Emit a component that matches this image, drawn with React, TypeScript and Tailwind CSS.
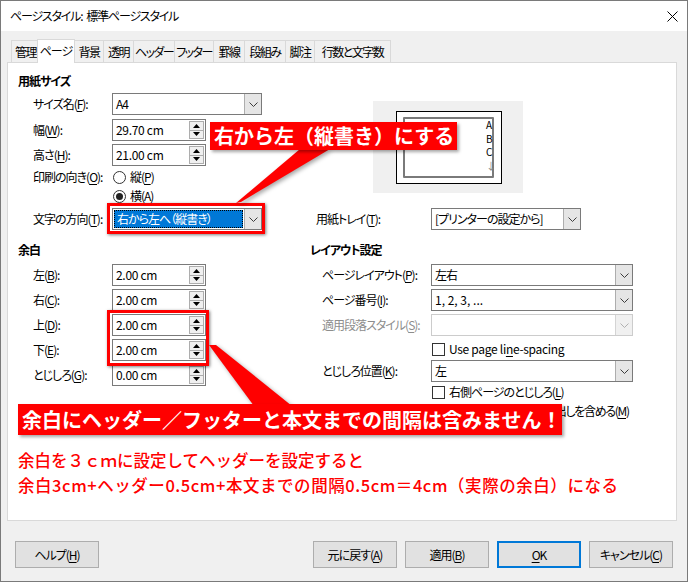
import React from "react";

const FONT = "font-['Noto_Sans_CJK_JP','Noto_Sans',sans-serif]";
const PALT = "[font-feature-settings:'palt']";

function U({ children }: { children: React.ReactNode }) {
  return <span className="underline underline-offset-[2px]">{children}</span>;
}

function Chevron({ color = "#3c3c3c" }: { color?: string }) {
  return (
    <svg width="9" height="5" viewBox="0 0 9 5">
      <path d="M0.5 0.5L4.5 4.5L8.5 0.5" fill="none" stroke={color} strokeWidth="1" />
    </svg>
  );
}

function Combo({
  width,
  children,
  disabled,
  selected,
}: {
  width: string;
  children?: React.ReactNode;
  disabled?: boolean;
  selected?: boolean;
}) {
  return (
    <div
      className={`${width} flex h-[22px] shrink-0 border bg-white ${
        disabled ? "border-[#cccccc]" : "border-[#7a7a7a]"
      }`}
    >
      {selected ? (
        <div className="flex flex-1 p-px">
          <div className="flex flex-1 items-center border border-dotted border-black bg-[#0078d7] pl-[2px] text-white">
            {children}
          </div>
        </div>
      ) : (
        <div className="flex flex-1 items-center whitespace-nowrap pl-[3px]">{children}</div>
      )}
      <div
        className={`flex w-[17px] items-center justify-center border-l ${
          disabled ? "border-[#d4d4d4] bg-[#f0f0f0]" : "border-[#adadad] bg-[#e5e5e5]"
        }`}
      >
        <Chevron color={disabled ? "#b0b0b0" : "#3c3c3c"} />
      </div>
    </div>
  );
}

function Spin({ value }: { value: string }) {
  return (
    <div className="flex h-[22px] w-[94px] shrink-0 border border-[#7a7a7a] bg-white">
      <div className="flex flex-1 items-center pl-[3px] tracking-[-0.3px]">{value}</div>
      <div className="flex w-[16px] flex-col py-px pr-px">
        <div className="flex flex-1 items-center justify-center border border-[#adadad] bg-[#f0f0f0]">
          <svg width="7" height="4" viewBox="0 0 7 4">
            <path d="M3.5 0L7 4H0Z" fill="#000" />
          </svg>
        </div>
        <div className="-mt-px flex flex-1 items-center justify-center border border-[#adadad] bg-[#f0f0f0]">
          <svg width="7" height="4" viewBox="0 0 7 4">
            <path d="M0 0H7L3.5 4Z" fill="#000" />
          </svg>
        </div>
      </div>
    </div>
  );
}

function Radio({ checked }: { checked?: boolean }) {
  return (
    <span className="flex h-[13px] w-[13px] shrink-0 items-center justify-center rounded-full border border-[#333333] bg-white">
      {checked && <span className="h-[7px] w-[7px] rounded-full bg-[#222222]" />}
    </span>
  );
}

function Check() {
  return <span className="h-[13px] w-[13px] shrink-0 border border-[#333333] bg-white" />;
}

function Tab({ w, label, active }: { w: string; label: string; active?: boolean }) {
  if (active) {
    return (
      <div
        className={`${w} relative z-10 -mb-px -ml-[2px] -mr-px flex h-[24px] items-center justify-center whitespace-nowrap border border-b-0 border-[#d9d9d9] bg-white pb-[2px]`}
      >
        {label}
      </div>
    );
  }
  return (
    <div
      className={`${w} -mr-px flex h-[22px] items-center justify-center whitespace-nowrap border border-b-0 border-[#d9d9d9] bg-[#f0f0f0] tracking-[-1.5px]`}
    >
      {label}
    </div>
  );
}

function Btn({ children, primary }: { children: React.ReactNode; primary?: boolean }) {
  return (
    <div
      className={`flex h-[27px] w-[84px] items-center justify-center whitespace-nowrap bg-[#e1e1e1] ${
        primary ? "border-2 border-[#0078d7]" : "border border-[#adadad]"
      }`}
    >
      {children}
    </div>
  );
}

export default function App() {
  return (
    <div
      className={`relative h-[584px] w-[689px] overflow-hidden bg-white text-[12px] tracking-[-1px] text-black ${FONT} ${PALT}`}
    >
      <div className="flex h-[582px] w-[688px] flex-col border border-[#7a7a7a]">
        {/* Title bar */}
        <div className="flex h-[30px] items-center justify-between bg-white pl-[9px] pr-[9px]">
          <span className="flex whitespace-nowrap text-[12px] tracking-[-1.2px]">
            <span>ページスタイル:</span>
            <span className="ml-[4px]">標準ページスタイル</span>
          </span>
          <svg width="11" height="11" viewBox="0 0 11 11">
            <path d="M0.5 0.5L10.5 10.5M10.5 0.5L0.5 10.5" stroke="#000" strokeWidth="1" />
          </svg>
        </div>

        {/* Body */}
        <div className="flex flex-1 flex-col bg-[#f0f0f0] pl-[6px]">
          {/* Tabs */}
          <div className="mt-[7px] flex h-[24px] items-end pl-[4px]">
            <Tab w="w-[29px]" label="管理" />
            <Tab w="w-[38px]" label="ページ" active />
            <Tab w="w-[30px]" label="背景" />
            <Tab w="w-[31px]" label="透明" />
            <Tab w="w-[42px]" label="ヘッダー" />
            <Tab w="w-[40px]" label="フッター" />
            <Tab w="w-[32px]" label="罫線" />
            <Tab w="w-[42px]" label="段組み" />
            <Tab w="w-[30px]" label="脚注" />
            <Tab w="w-[77px]" label="行数と文字数" />
          </div>

          {/* Panel */}
          <div className="h-[459px] w-[670px] border border-[#d9d9d9] bg-white pl-[10px] pt-[10px]">
            <div className="h-[16px] font-bold leading-[16px]">用紙サイズ</div>
            <div className="flex">
              <div className="flex w-[355px] flex-col pl-[15px] pt-[4px]">
                <div className="flex h-[22px] items-center">
                  <span className="w-[79px] whitespace-nowrap">
                    サイズ名(<U>F</U>):
                  </span>
                  <Combo width="w-[150px]">A4</Combo>
                </div>
                <div className="mt-[4px] flex h-[22px] items-center">
                  <span className="w-[79px] whitespace-nowrap">
                    幅(<U>W</U>):
                  </span>
                  <Spin value="29.70 cm" />
                </div>
                <div className="mt-[3px] flex h-[22px] items-center">
                  <span className="w-[79px] whitespace-nowrap">
                    高さ(<U>H</U>):
                  </span>
                  <Spin value="21.00 cm" />
                </div>
                <div className="mt-[2px] flex h-[18px] items-center">
                  <span className="w-[80px] whitespace-nowrap">
                    印刷の向き(<U>O</U>):
                  </span>
                  <Radio />
                  <span className="ml-[4px]">
                    縦(<U>P</U>)
                  </span>
                </div>
                <div className="mt-[1px] flex h-[18px] items-center pl-[80px]">
                  <Radio checked />
                  <span className="ml-[4px]">
                    横(<U>A</U>)
                  </span>
                </div>
              </div>
              <div className="relative mt-[12px] h-[92px] w-[150px] bg-[#f0f0f0]">
                <div className="absolute left-[23px] top-[10px] h-[73px] w-[106px] border border-black bg-white">
                  <div className="absolute left-[6px] top-[5px] h-[61px] w-[91px] rounded-[1px] border-2 border-[#7a7a7a]" />
                  <div className="absolute left-[89px] top-[6px] flex flex-col text-[10px] leading-[13.5px] tracking-normal [font-feature-settings:normal]">
                    <span>A</span>
                    <span>B</span>
                    <span>C</span>
                    <span className="text-[#888888]">↓</span>
                  </div>
                </div>
              </div>
            </div>
            <div className="mt-[3px] flex h-[22px] items-center pl-[15px]">
              <span className="w-[79px] whitespace-nowrap">
                文字の方向(<U>T</U>):
              </span>
              <Combo width="w-[150px]" selected>
                右から左へ（縦書き）
              </Combo>
              <span className="ml-[54px] w-[115px] whitespace-nowrap">
                用紙トレイ(<U>T</U>):
              </span>
              <Combo width="w-[150px]">[プリンターの設定から]</Combo>
            </div>

            {/* Margins + layout */}
            <div className="mt-[12px] flex">
              <div className="w-[292px]">
                <div className="h-[16px] font-bold leading-[16px]">余白</div>
                <div className="flex flex-col gap-[3px] pl-[15px] pt-[6px]">
                  {[
                    ["左", "B"],
                    ["右", "C"],
                    ["上", "D"],
                    ["下", "E"],
                    ["とじしろ", "G"],
                  ].map(([l, k], i) => (
                    <div key={k} className="flex h-[22px] items-center">
                      <span className="w-[79px] whitespace-nowrap">
                        {l}(<U>{k}</U>):
                      </span>
                      <Spin value={i === 4 ? "0.00 cm" : "2.00 cm"} />
                    </div>
                  ))}
                </div>
              </div>
              <div>
                <div className="h-[16px] font-bold leading-[16px]">レイアウト設定</div>
                <div className="flex flex-col pl-[12px] pt-[6px]">
                  <div className="flex h-[22px] items-center">
                    <span className="w-[109px] whitespace-nowrap">
                      ページレイアウト(<U>P</U>):
                    </span>
                    <Combo width="w-[202px]">左右</Combo>
                  </div>
                  <div className="mt-[3px] flex h-[22px] items-center">
                    <span className="w-[109px] whitespace-nowrap">
                      ページ番号(<U>I</U>):
                    </span>
                    <Combo width="w-[202px]">
                      <span className="tracking-normal">1, 2, 3, ...</span>
                    </Combo>
                  </div>
                  <div className="mt-[3px] flex h-[22px] items-center">
                    <span className="w-[109px] whitespace-nowrap text-[#8d8d8d]">
                      適用段落スタイル(<U>S</U>):
                    </span>
                    <Combo width="w-[202px]" disabled />
                  </div>
                  <div className="mt-[3px] flex h-[20px] items-center pl-[110px]">
                    <Check />
                    <span className="ml-[4px] whitespace-nowrap tracking-[-0.3px]">
                      Use page li<U>n</U>e-spacing
                    </span>
                  </div>
                  <div className="mt-px flex h-[22px] items-center">
                    <span className="w-[109px] whitespace-nowrap">
                      とじしろ位置(<U>K</U>):
                    </span>
                    <Combo width="w-[202px]">左</Combo>
                  </div>
                  <div className="flex h-[20px] items-center pl-[110px]">
                    <Check />
                    <span className="ml-[4px] whitespace-nowrap">
                      右側ページのとじしろ(<U>L</U>)
                    </span>
                  </div>
                  <div className="-mt-px flex h-[20px] items-center pl-[110px]">
                    <Check />
                    <span className="ml-[4px] whitespace-nowrap tracking-[-1.3px]">
                      ページの背景に段落見出しを含める(<U>M</U>)
                    </span>
                  </div>
                </div>
              </div>
            </div>

            <div className="mt-[27px] flex flex-col text-[16.5px] font-medium leading-[25px] tracking-normal text-[#ff0000] [font-feature-settings:normal]">
              <span className="whitespace-nowrap">余白を３ｃｍに設定してヘッダーを設定すると</span>
              <span className="whitespace-nowrap tracking-[0.55px]">
                余白3cm+ヘッダー0.5cm+本文までの間隔0.5cm＝4cm（実際の余白）になる
              </span>
            </div>
          </div>

          {/* Buttons */}
          <div className="mt-[20px] flex items-center justify-between pl-[8px] pr-[14px]">
            <Btn>
              ヘルプ(<U>H</U>)
            </Btn>
            <div className="flex gap-[8px]">
              <Btn>
                元に戻す(<U>A</U>)
              </Btn>
              <Btn>
                適用(<U>B</U>)
              </Btn>
              <Btn primary>
                <U>O</U>K
              </Btn>
              <Btn>
                キャンセル(<U>C</U>)
              </Btn>
            </div>
          </div>
        </div>
      </div>

      {/* Annotation overlays */}
      <div className="absolute left-[107px] top-[203px] h-[31px] w-[158px] border-[3px] border-[#ff0000] shadow-[1px_1px_3px_rgba(0,0,0,0.5)]" />
      <div className="absolute left-[107px] top-[310px] h-[56px] w-[102px] border-[3px] border-[#ff0000] shadow-[1px_1px_3px_rgba(0,0,0,0.5)]" />

      <svg
        className="pointer-events-none absolute left-0 top-0 drop-shadow-[2px_2px_2px_rgba(0,0,0,0.35)]"
        width="689"
        height="584"
        viewBox="0 0 689 584"
      >
        <polygon points="300,149 330,149 241,202 236,203" fill="#ff0000" />
        <polygon points="209,345 216,345 292,406 254,406" fill="#ff0000" />
      </svg>

      <div className="absolute left-[210px] top-[122px] flex h-[28px] w-[247px] items-center whitespace-nowrap bg-[#ff0000] pl-[4px] text-[20px] font-bold tracking-normal text-white shadow-[2px_2px_3px_rgba(0,0,0,0.35)] [font-feature-settings:normal]">
        右から左（縦書き）にする
      </div>
      <div className="absolute left-[18px] top-[404px] flex h-[31px] w-[544px] items-center whitespace-nowrap bg-[#ff0000] pl-[4px] text-[20px] font-bold tracking-normal text-white shadow-[2px_2px_3px_rgba(0,0,0,0.35)] [font-feature-settings:normal]">
        余白にヘッダー／フッターと本文までの間隔は含みません！
      </div>
    </div>
  );
}
